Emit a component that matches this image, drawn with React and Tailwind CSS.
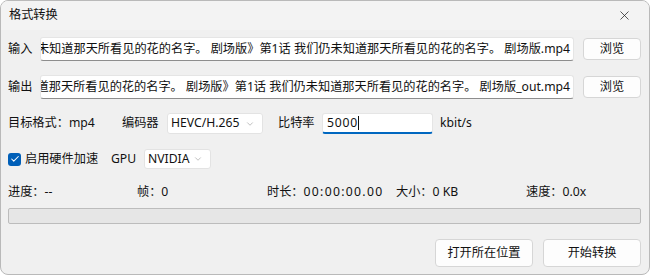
import { Check, ChevronDown, X } from 'lucide-react'

const font = "font-['Noto_Sans','Noto_Sans_CJK_SC',sans-serif]"

const inName = '《我们仍未知道那天所看见的花的名字。 剧场版》第1话 我们仍未知道那天所看见的花的名字。 剧场版.mp4'
const outName = '《我们仍未知道那天所看见的花的名字。 剧场版》第1话 我们仍未知道那天所看见的花的名字。 剧场版_out.mp4'

function PathField({ value }) {
  return (
    <div className="flex-1 h-[24px] flex items-center justify-end overflow-hidden whitespace-nowrap bg-white border border-[#e5e5e5] border-b-[#8d8d8d] rounded-[3px] pr-[3px]">
      <span className="shrink-0">{value}</span>
    </div>
  )
}

function Btn({ children, className = '' }) {
  return (
    <button className={'flex items-center justify-center bg-[#fdfdfd] border border-[#d6d6d6] rounded-[4px] ' + className}>
      {children}
    </button>
  )
}

function Select({ value, className = '' }) {
  return (
    <div className={'flex items-center justify-between bg-white border border-[#e3e3e3] rounded-[3px] pl-[3px] pr-[7px] ' + className}>
      <span>{value}</span>
      <ChevronDown className="w-[10px] h-[10px] text-[#9a9a9a]" strokeWidth={1.5} />
    </div>
  )
}

export default function App() {
  return (
    <div className={`w-[650px] h-[275px] bg-[#f0f0f0] border border-[#b9b9b9] rounded-[8px] overflow-hidden text-[12.2px] text-[#111] ${font} flex flex-col`}>
      {/* title bar */}
      <div className="h-[29px] shrink-0 flex items-center justify-between pl-[8px] pr-[17px] bg-[#f3f3f3]">
        <span>格式转换</span>
        <X className="w-[15px] h-[15px] text-[#222]" strokeWidth={1.2} />
      </div>

      <div className="flex flex-col pl-[7px] pr-[8px]">
        {/* input */}
        <div className="flex items-center mt-[7px]">
          <span className="w-[32px]">输入</span>
          <PathField value={inName} />
          <Btn className="w-[58px] h-[22px] ml-[9px]">浏览</Btn>
        </div>

        {/* output */}
        <div className="flex items-center mt-[14px]">
          <span className="w-[32px]">输出</span>
          <PathField value={outName} />
          <Btn className="w-[58px] h-[22px] ml-[9px]">浏览</Btn>
        </div>

        {/* format row */}
        <div className="flex items-center mt-[14px] h-[21px]">
          <span className="w-[114px]">目标格式：mp4</span>
          <span className="w-[45px]">编码器</span>
          <Select value="HEVC/H.265" className="w-[96px] h-[21px]" />
          <span className="ml-[15px] w-[44px]">比特率</span>
          <div className="w-[111px] h-[21px] flex items-center bg-white border border-[#e5e5e5] border-b-2 border-b-[#0067c0] rounded-[3px] pl-[4px]">
            <span className="tracking-[0.8px]">5000</span>
            <span className="w-px h-[14px] bg-[#111]" />
          </div>
          <span className="ml-[7px]">kbit/s</span>
        </div>

        {/* hw accel row */}
        <div className="flex items-center mt-[15px] h-[20px]">
          <span className="w-[13px] h-[13px] rounded-[3px] bg-[#005fb8] flex items-center justify-center">
            <Check className="w-[10px] h-[10px] text-white" strokeWidth={2.5} />
          </span>
          <span className="ml-[4px] w-[86px]">启用硬件加速</span>
          <span className="w-[33px]">GPU</span>
          <Select value="NVIDIA" className="w-[67px] h-[20px]" />
        </div>

        {/* stats */}
        <div className="flex items-center mt-[15px] h-[16px]">
          <span className="w-[129px]">进度：--</span>
          <span className="w-[130px]">帧：0</span>
          <span className="w-[129px]">时长：<span className="tracking-[1.3px]">00:00:00.00</span></span>
          <span className="w-[130px]">大小：0 KB</span>
          <span>速度：0.0x</span>
        </div>

        <div className="mt-[8px] h-[16px] bg-[#e6e6e6] border border-[#bcbcbc] rounded-[2px]" />

        {/* actions */}
        <div className="flex justify-end gap-[10px] mt-[15px]">
          <Btn className="w-[98px] h-[28px]">打开所在位置</Btn>
          <Btn className="w-[98px] h-[28px]">开始转换</Btn>
        </div>
      </div>
    </div>
  )
}
